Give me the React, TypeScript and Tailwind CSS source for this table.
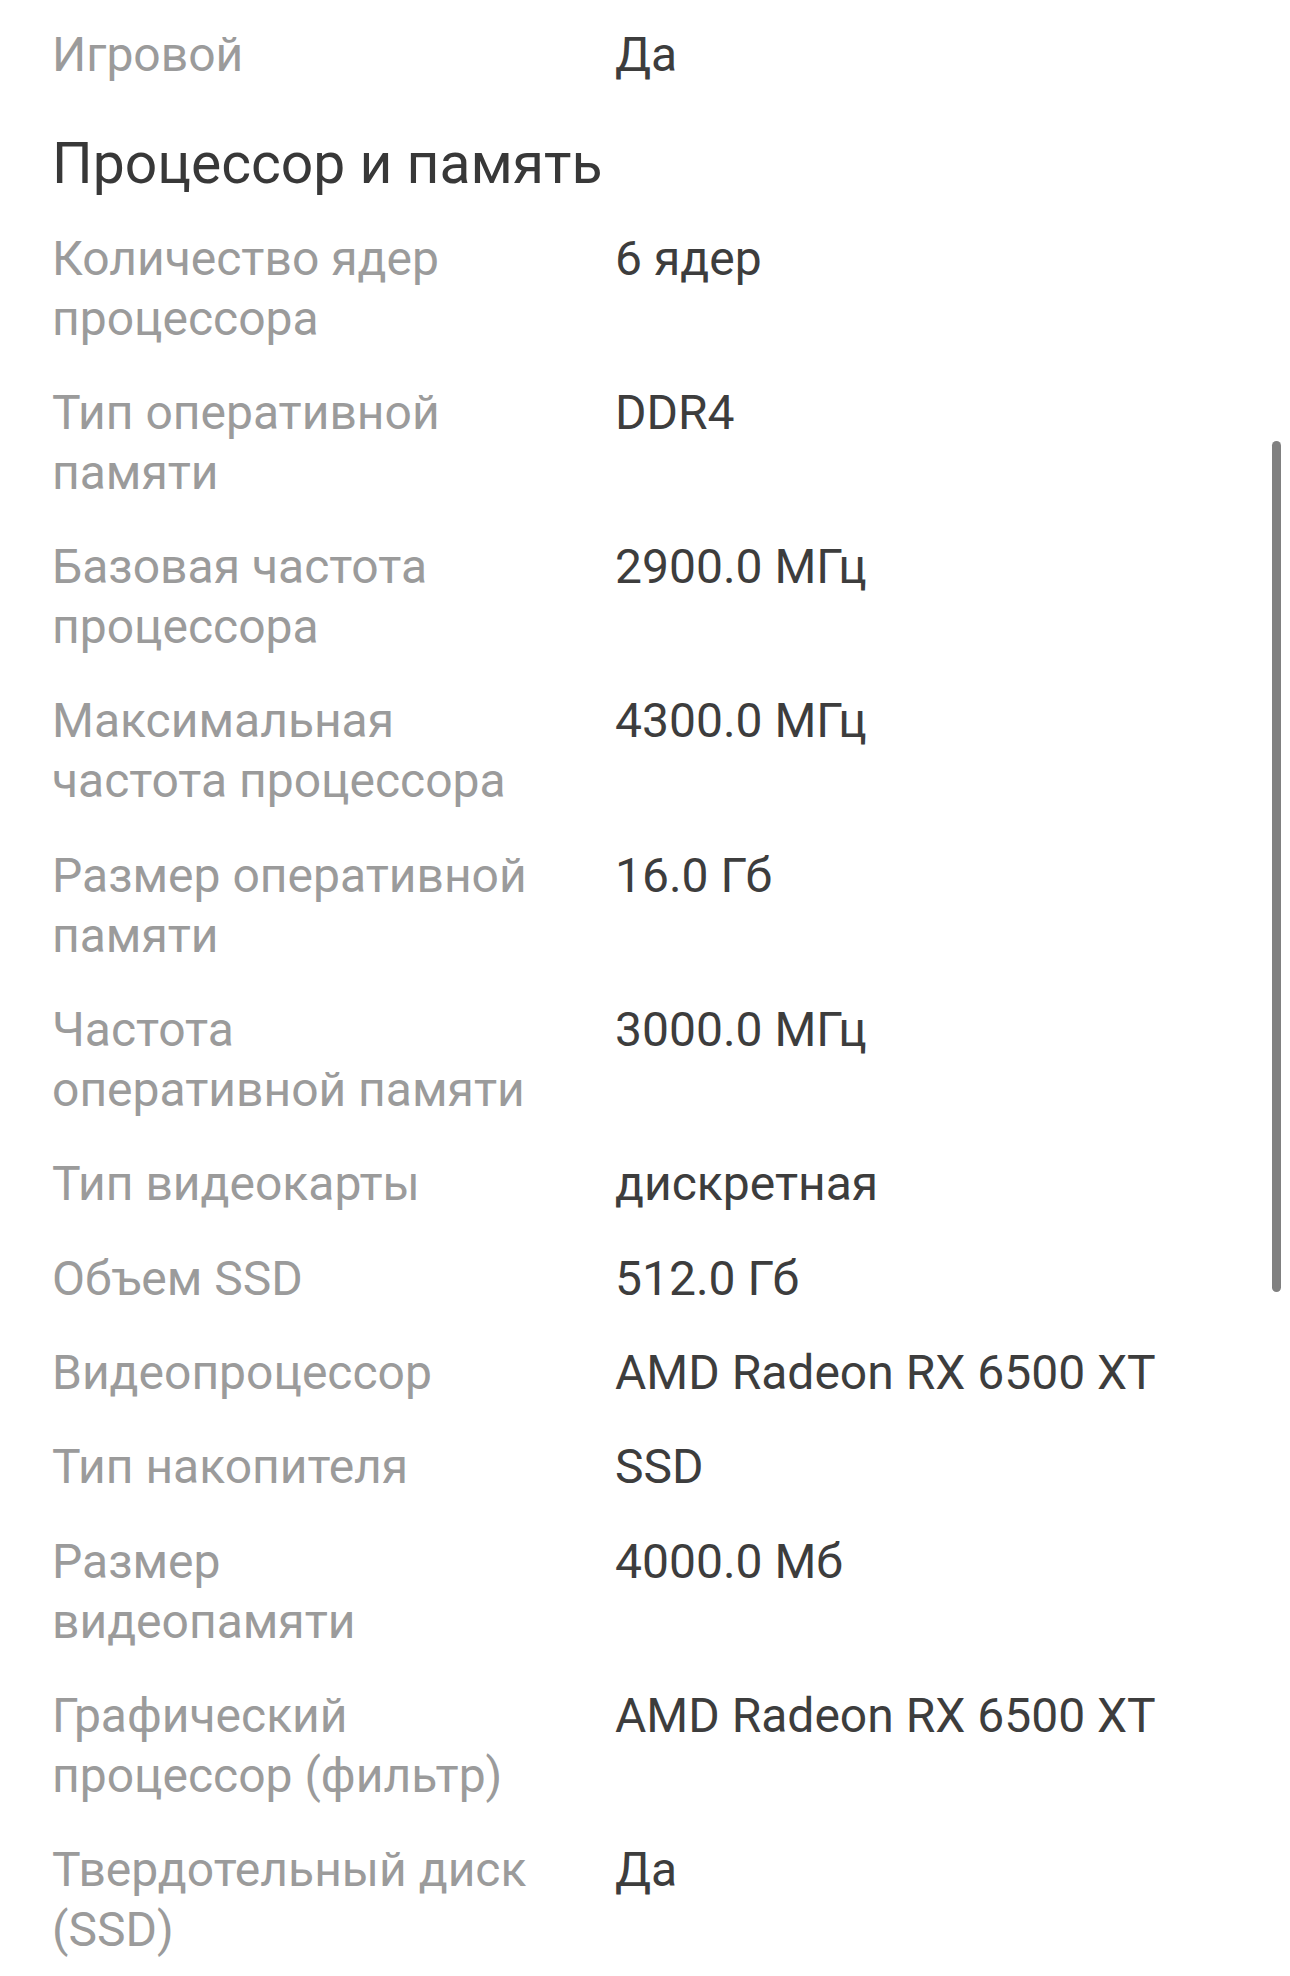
const rows: [string, string][] = [
  ["Количество ядер процессора", "6 ядер"],
  ["Тип оперативной памяти", "DDR4"],
  ["Базовая частота процессора", "2900.0 МГц"],
  ["Максимальная частота процессора", "4300.0 МГц"],
  ["Размер оперативной памяти", "16.0 Гб"],
  ["Частота оперативной памяти", "3000.0 МГц"],
  ["Тип видеокарты", "дискретная"],
  ["Объем SSD", "512.0 Гб"],
  ["Видеопроцессор", "AMD Radeon RX 6500 XT"],
  ["Тип накопителя", "SSD"],
  ["Размер видеопамяти", "4000.0 Мб"],
  ["Графический процессор (фильтр)", "AMD Radeon RX 6500 XT"],
  ["Твердотельный диск (SSD)", "Да"],
]

function Row({ label, value }: { label: string; value: string }) {
  return (
    <div className="grid grid-cols-[478px_1fr] gap-x-[85px]">
      <div className="text-[#9b9b9b]">{label}</div>
      <div className="text-[#3d3d3d]">{value}</div>
    </div>
  )
}

export default function App() {
  return (
    <div className="relative min-h-[1976px] w-[1290px] bg-white font-['Roboto',sans-serif] text-[48px] leading-[60px]">
      <div className="flex flex-col gap-[34.3px] px-[52px] pt-[25px]">
        <Row label="Игровой" value="Да" />
        <h2 className="mt-[15px] text-[57px] text-[#383838]">Процессор и память</h2>
        {rows.map(([label, value]) => (
          <Row key={label} label={label} value={value} />
        ))}
      </div>
      <div className="absolute left-[1272px] top-[441px] h-[851px] w-[9px] rounded-full bg-[#808080]" />
    </div>
  )
}
